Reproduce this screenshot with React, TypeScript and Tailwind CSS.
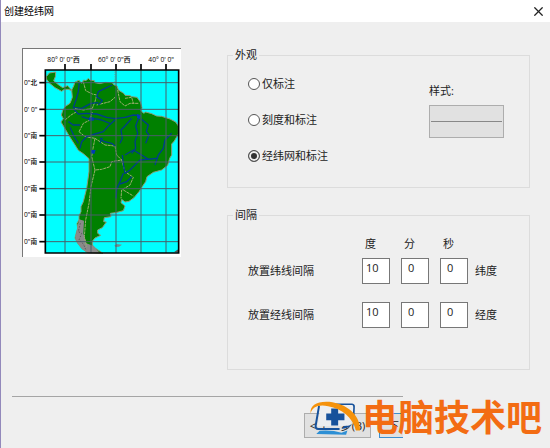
import { useState } from "react";
import { X } from "lucide-react";

const APPEARANCE = ["仅标注", "刻度和标注", "经纬网和标注"];

const INTERVALS = [
  { id: "lat", label: "放置纬线间隔", unit: "纬度", values: ["10", "0", "0"] },
  { id: "lng", label: "放置经线间隔", unit: "经度", values: ["10", "0", "0"] },
];

const PARTS = ["度", "分", "秒"];

const MERIDIANS = [150, 228, 303, 378, 453];
const PARALLELS = [128, 208, 287, 366, 446, 525, 605];
const SOUTH_LABELS = [287, 366, 446, 525, 605];

const LAND =
  "M170 150 L176 138 180 126 192 121 200 130 206 120 213 122 220 115 226 121 238 122 240 128 255 131 270 127 292 128 296 134 306 138 310 150 326 160 330 166 345 167 350 170 366 172 376 186 381 203 378 212 386 220 392 216 410 221 425 228 440 229 465 237 482 246 490 258 490 282 478 303 470 312 470 345 464 355 458 376 440 390 415 397 396 410 392 425 385 435 372 455 357 473 342 484 330 486 320 478 318 488 330 498 325 512 302 518 286 520 288 530 268 533 266 545 274 546 262 563 248 570 248 580 257 586 240 594 232 604 232 615 240 624 264 640 218 638 201 626 188 610 180 594 184 578 188 565 186 550 192 540 192 528 198 515 198 500 205 485 215 445 222 395 222 356 205 341 190 331 180 315 162 287 150 266 138 246 145 236 139 225 143 212 150 200 165 190 172 172Z";

const RIVERS = [
  "M193 128 L190 155 183 180 175 202 200 205 228 190 250 188",
  "M292 135 L270 145 250 155 245 170 262 182 250 195",
  "M175 206 L190 222 215 220 245 222 275 232 300 236 330 232 355 225 372 226",
  "M160 245 L175 255 195 255 M165 262 L178 290 190 310",
  "M200 230 L225 238 240 236 260 240 285 250",
  "M300 240 L280 258 265 275 240 282 215 290 200 305 195 325",
  "M350 235 L330 258 318 270 322 295 315 310",
  "M370 236 L362 258 368 280 360 305 362 325 350 340",
  "M378 236 L400 255 394 275 402 285 392 310",
  "M255 295 L268 305 290 310 300 318 M262 293 L255 310",
  "M470 280 L450 300 445 325 430 345 420 375",
  "M330 345 L355 330 380 345 400 358 425 355 375 360 345 390 330 400 325 372 322 345",
  "M325 400 L315 425 305 448 303 475 M350 410 L335 425 315 432",
];

const BORDERS =
  "M205 125 L212 152 232 162 245 165 240 185 232 205 M245 195 L285 185 300 172 M308 150 L315 185 330 198 345 190 372 190 M330 175 L350 172 355 190 M150 240 L168 225 185 215 M232 205 L205 210 178 205 M192 275 L205 250 225 240 232 215 M192 275 L210 290 240 295 235 320 230 350 240 390 260 388 285 380 290 365 320 360 330 395 355 412 345 435 320 450 318 475 M240 295 L270 315 300 318 305 345 320 360 M325 450 L355 468 M240 390 L228 440 222 490 212 540 208 590 215 620";

function GridPreview() {
  return (
    <svg viewBox="24 27 474 624" className="block h-[208px] w-[158px]" aria-hidden="true">
      <rect x="24" y="27" width="474" height="624" fill="#fff" />
      <rect x="91" y="90" width="400" height="549" fill="#00ffff" />
      <g stroke="#8b9a76" strokeWidth="3" strokeLinejoin="round">
        <path d={LAND} fill="#008000" />
        <path d="M94 110 L103 99 122 96 121 110 116 122 130 134 143 143 158 137 171 152 160 148 148 148 140 154 120 143 104 130 95 118Z" fill="#008000" />
      </g>
      {/* 智利南部群岛 */}
      <path d="M192 538 L207 542 205 580 214 610 236 618 254 638 218 638 200 626 187 608 181 594Z" fill="#8a8a8a" />
      <path d="M196 550 L190 575 200 580 192 600 205 612 212 628" fill="none" stroke="#555" strokeWidth="3" strokeDasharray="4 5" />
      <path d="M298 617 L305 612 321 614 312 620 302 621Z" fill="#6f8f8f" />
      <path d="M478 635 L490 628 490 638Z" fill="#555" />
      <path d="M299 95 V128" stroke="#8b9a76" strokeWidth="2" strokeDasharray="3 4" />
      <path d={BORDERS} fill="none" stroke="#9cad70" strokeWidth="3" strokeDasharray="9 2" />
      <g fill="none" stroke="#003c8c" strokeWidth="4" strokeLinejoin="round">
        {RIVERS.map((d) => (
          <path key={d} d={d} />
        ))}
      </g>
      <path d="M222 232 l14 0 0 10 -14 0z M366 222 l12 4 -4 12 -8 -4z M228 330 l14 0 -4 12 -10 -2z" fill="#003cb4" />
      <g stroke="#4a5f68" strokeWidth="3">
        {MERIDIANS.map((x) => (
          <path key={x} d={`M${x} 90V639`} />
        ))}
        {PARALLELS.map((y) => (
          <path key={y} d={`M91 ${y}H491`} />
        ))}
      </g>
      <g stroke="#000" strokeWidth="5">
        {MERIDIANS.map((x) => (
          <path key={x} d={`M${x} 72V90`} />
        ))}
        {PARALLELS.map((y) => (
          <path key={y} d={`M73 ${y}H91`} />
        ))}
      </g>
      <path d="M91 639V90H491V639Z" fill="none" stroke="#000" strokeWidth="5" />
      <g fill="#000" fontSize="20" fontWeight="500">
        <text x="97" y="66">80° 0' 0"西</text>
        <text x="249" y="66">60° 0' 0"西</text>
        <text x="400" y="66">40° 0' 0"</text>
        <text x="27" y="135">0"北</text>
        <text x="27" y="215">0' 0"</text>
        {SOUTH_LABELS.map((y) => (
          <text key={y} x="27" y={y + 7}>0"南</text>
        ))}
      </g>
    </svg>
  );
}

function SiteLogo() {
  return (
    <svg viewBox="20 15 160 110" className="h-[37px] w-[53px]" aria-hidden="true">
      <path d="M54 34 L148 34 146 92 46 94Z" fill="#eceef0" />
      <path d="M60 27 L150 27 Q157 28 156 36 L154 80" fill="none" stroke="#17529b" strokeWidth="5" />
      <path d="M50 34 L40 92 Q39 101 48 102 L110 102" fill="none" stroke="#17529b" strokeWidth="6" strokeLinecap="round" />
      <path d="M87 40 h21 v15 h19 v20 h-19 v16 h-21 v-16 h-15 v-20 h15z" fill="#17529b" />
      <path d="M150 88 Q140 100 118 101 L126 93 Q138 93 150 88Z" fill="#17529b" />
      <path d="M52 107 Q90 104 118 113 L136 106 132 119 42 117Z" fill="#2d8fd5" />
      <path d="M25 55 C21 28 50 15 91 21 C140 30 175 62 174 106 L162 106 C150 64 120 42 78 33 C48 27 30 35 25 55Z" fill="#f5920b" />
    </svg>
  );
}

export default function App() {
  const [appearance, setAppearance] = useState(2);

  return (
    <div className="relative min-h-screen border-l border-[#9389bb] bg-[#efefef] font-['Open_Sans','Noto_Sans_CJK_SC',sans-serif] text-[11px] leading-4 text-[#222]">
      {/* 标题栏 */}
      <header className="flex h-[22px] items-center justify-between bg-white pl-[3px] pr-1">
        <h1 className="text-[10px] text-black">创建经纬网</h1>
        <button type="button" aria-label="关闭">
          <X size={15} strokeWidth={2} />
        </button>
      </header>

      <main className="flex items-start gap-[46px] pl-[21px] pr-[20px] pt-[26px]">
        <div className="shrink-0 border-l border-t border-[#777]">
          <GridPreview />
        </div>

        <div className="flex min-w-0 flex-1 flex-col gap-5">
          {/* 外观 */}
          <fieldset className="flex h-[140px] items-start justify-between border border-[#dcdcdc] pl-5 pr-[25px]">
            <legend className="-ml-[15px] px-[2px] leading-[14px]">外观</legend>
            <div className="flex flex-col gap-5 pt-[14px]">
              {APPEARANCE.map((name, i) => (
                <label key={name} className="flex items-center gap-[2px] whitespace-nowrap">
                  <input
                    type="radio"
                    name="appearance"
                    checked={appearance === i}
                    onChange={() => setAppearance(i)}
                    className="size-3 appearance-none rounded-full border border-[#555] bg-white checked:bg-[#333] checked:shadow-[inset_0_0_0_2px_#efefef]"
                  />
                  {name}
                </label>
              ))}
            </div>
            <div className="pt-[21px]">
              <label htmlFor="line-style" className="block">样式:</label>
              <button
                id="line-style"
                type="button"
                className="mt-[6px] flex h-[33px] w-[75px] items-center border border-[#adadad] bg-[#e1e1e1] px-[1px]"
              >
                <span className="h-px w-full bg-[#888]" />
              </button>
            </div>
          </fieldset>

          {/* 间隔 */}
          <fieldset className="h-[162px] border border-[#dcdcdc] pl-5">
            <legend className="-ml-[15px] px-[2px] leading-[14px]">间隔</legend>
            <div className="flex gap-[11px] pl-[114px] pt-[14px]">
              {PARTS.map((part) => (
                <span key={part} className="w-7 pl-[3px]">{part}</span>
              ))}
            </div>
            <div className="mt-[6px] flex flex-col gap-[18px]">
              {INTERVALS.map((row) => (
                <div key={row.id} className="flex items-center">
                  <label htmlFor={`${row.id}-0`} className="w-[114px] shrink-0">{row.label}</label>
                  <div className="flex gap-[11px]">
                    {row.values.map((value, i) => (
                      <input
                        key={PARTS[i]}
                        id={`${row.id}-${i}`}
                        aria-label={`${row.label} ${PARTS[i]}`}
                        defaultValue={value}
                        className="h-[26px] w-7 border border-[#777] bg-white pb-[7px] pl-[3px] [&:not(:first-child)]:pl-[6px]"
                      />
                    ))}
                  </div>
                  <span className="pl-[7px]">{row.unit}</span>
                </div>
              ))}
            </div>
          </fieldset>
        </div>
      </main>

      {/* 底部按钮 */}
      <footer className="ml-[11px] mr-[147px] mt-[26px] overflow-hidden border-t border-[#a5a5a5] pt-4">
        <div className="flex gap-2 pl-[292px]">
          <button type="button" className="h-[25px] w-[67px] shrink-0 whitespace-nowrap border border-[#adadad] bg-[#e1e1e1]">
            &lt; 上一步(B)
          </button>
          <button type="button" className="h-[25px] min-w-0 flex-1 overflow-hidden whitespace-nowrap border border-r-0 border-[#3c8fd0] bg-[#e1e1e1] pl-2 text-left">
            下
          </button>
        </div>
      </footer>

      {/* 水印 */}
      <div className="pointer-events-none absolute bottom-[10px] right-2 flex items-center">
        <SiteLogo />
        <span className="text-[36px] font-bold leading-[40px] text-[#f36c13]">电脑技术吧</span>
      </div>
    </div>
  );
}
